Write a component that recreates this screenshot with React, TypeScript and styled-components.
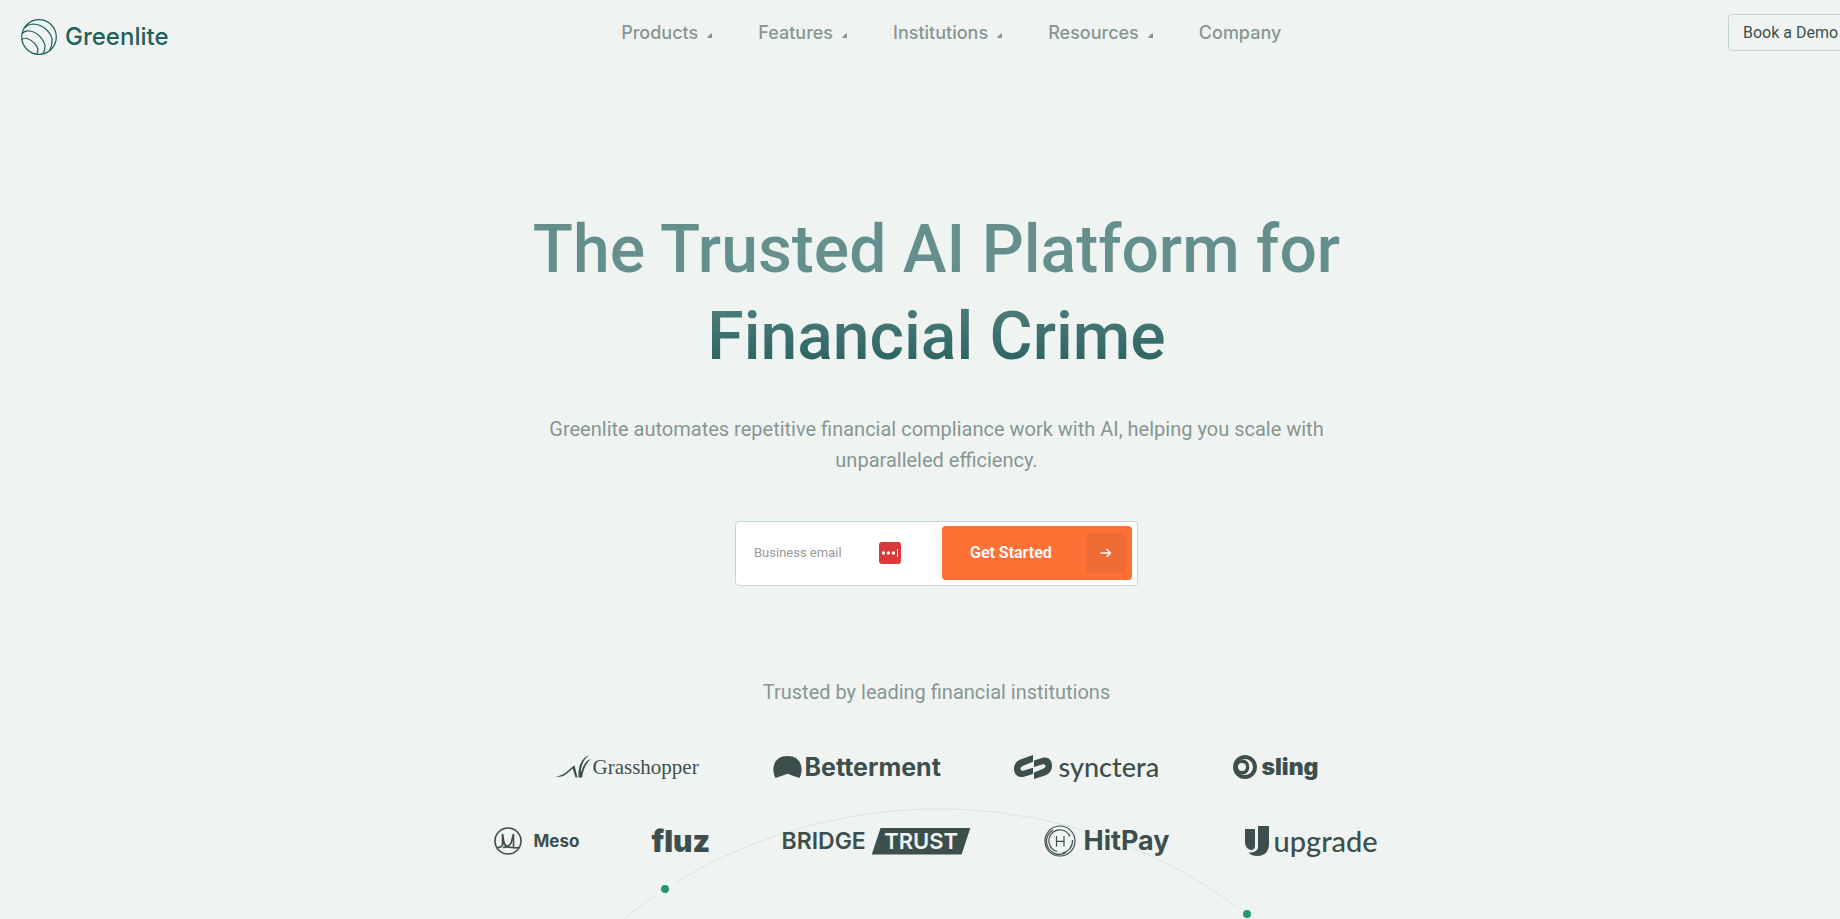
import React from "react";
import styled, { createGlobalStyle } from "styled-components";

const sans = `Inter, "Liberation Sans", sans-serif`;
const ink = "#3d4f4c";
const muted = "#879692";

const GlobalStyle = createGlobalStyle`
  *, *::before, *::after { box-sizing: border-box; }
  body { margin: 0; background: #eff4f3; font-family: ${sans}; color: ${ink}; }
`;

const Viewport = styled.div`
  position: relative;
  height: 100vh;
  overflow: hidden;
`;

/* The canvas is slightly wider than the window, so the demo button runs off its right edge. */
const Canvas = styled.div`
  position: relative;
  width: calc(100% + 33px);
`;

const Header = styled.header`
  display: flex;
  justify-content: space-between;
  align-items: flex-start;
  padding: 14px 21px 0;
`;

const Brand = styled.a`
  display: flex;
  align-items: center;
  gap: 8px;
  padding-top: 5px;
  color: #1f615c;
  font-size: 24px;
  font-weight: 500;
  line-height: 36px;
  text-decoration: none;
`;

const Nav = styled.nav`
  display: flex;
  gap: 46px;
  padding: 7px 0 0 6px;
`;

const NavLink = styled.a`
  display: flex;
  align-items: center;
  gap: 9px;
  color: ${muted};
  font-size: 18px;
  font-weight: 500;
  line-height: 24px;
  text-decoration: none;
`;

const Caret = styled.svg`
  margin-top: 4px;
`;

const DemoButton = styled.button`
  width: 124px;
  height: 37px;
  padding: 0 0 0 14px;
  border: 1px solid #c3d8d2;
  border-radius: 4px;
  background: transparent;
  color: ${ink};
  font-family: Roboto, ${sans};
  font-size: 16px;
  text-align: left;
  white-space: nowrap;
`;

const Hero = styled.main`
  position: relative;
  display: flex;
  flex-direction: column;
  align-items: center;
  padding-top: 151px;
`;

const Title = styled.h1`
  max-width: 860px;
  margin: 0;
  font-family: Roboto, ${sans};
  font-size: 66px;
  font-weight: 500;
  line-height: 87px;
  text-align: center;
  color: transparent;
  background: linear-gradient(180deg, #648f8c 36%, #2a6260 92%);
  background-clip: text;
  -webkit-background-clip: text;
`;

const Lead = styled.p`
  max-width: 800px;
  margin: 34px 0 0;
  color: ${muted};
  font-family: Roboto, ${sans};
  font-size: 20px;
  line-height: 31px;
  text-align: center;
`;

const SignupForm = styled.form`
  display: flex;
  align-items: center;
  width: 403px;
  height: 65px;
  margin-top: 45px;
  padding: 4px 5px 6px;
  border: 1px solid #c3d8d2;
  border-radius: 4px;
  background: #fff;
`;

const EmailInput = styled.input`
  width: 138px;
  height: 40px;
  padding: 0 0 0 13px;
  border: 0;
  outline: 0;
  background: transparent;
  font-family: Roboto, ${sans};
  font-size: 13px;
  &::placeholder { color: #999; opacity: 1; }
`;

const SubmitButton = styled.button`
  display: flex;
  align-items: center;
  justify-content: space-between;
  width: 190px;
  height: 54px;
  margin-left: auto;
  padding: 0 6px 0 28px;
  border: 0;
  border-radius: 4px;
  background: #ff7035;
  color: #fff;
  font-family: Roboto, ${sans};
  font-size: 16px;
  font-weight: 600;
`;

const ArrowTile = styled.span`
  display: grid;
  place-items: center;
  width: 40px;
  height: 40px;
  border-radius: 4px;
  background: #ef6c36;
`;

const Trusted = styled.h2`
  margin: 91px 0 0;
  color: ${muted};
  font-family: Roboto, ${sans};
  font-size: 20px;
  font-weight: 400;
  line-height: 31px;
`;

const LogoRow = styled.div<{ $top: number }>`
  display: flex;
  align-items: center;
  gap: 73px;
  height: 36px;
  margin-top: ${(p) => p.$top}px;
`;

const Logo = styled.div<{ $width: number; $gap: number }>`
  display: flex;
  align-items: center;
  gap: ${(p) => p.$gap}px;
  width: ${(p) => p.$width}px;
  white-space: nowrap;
  svg { flex: none; }
`;

const Wordmark = styled.span<{ $size: number; $weight?: number; $font?: string }>`
  font-family: ${(p) => p.$font ?? sans};
  font-size: ${(p) => p.$size}px;
  font-weight: ${(p) => p.$weight ?? 400};
  line-height: 32px;
`;

const TrustPlate = styled.span`
  display: flex;
  align-items: center;
  justify-content: center;
  width: 100px;
  height: 27px;
  background: ${ink};
  color: #eff4f3;
  clip-path: polygon(9% 0, 100% 0, 91% 100%, 0 100%);
`;

const Orbit = styled.svg`
  position: absolute;
  top: 0;
  left: 50%;
  margin: 800px 0 0 -504px;
  pointer-events: none;
`;

const navItems = [
  { label: "Products", menu: true },
  { label: "Features", menu: true },
  { label: "Institutions", menu: true },
  { label: "Resources", menu: true },
  { label: "Company", menu: false },
];

const GreenliteMark = () => (
  <svg width="36" height="36" viewBox="0 0 36 36" fill="none" stroke="currentColor" strokeWidth="1.2">
    <circle cx="18" cy="18" r="17.3" />
    <path d="M3.5 9C7 5 10 5 13 5C24 6 32 16 31 23C31 27 30 29 28.5 31.5" />
    <path d="M1 15C3 12 6 11.500 9 12C17 13 24 22 24 28C24 31 23 33 22 34.500" />
    <path d="M1 21C2 19 4 19 6 19.500C12 21 17 28 17 31C17 33 16.500 34 15.500 35" />
  </svg>
);

const GrasshopperMark = () => (
  <svg width="35" height="24" viewBox="0 0 35 24" fill={ink}>
    <path d="M0 21.300C8 21 12 15 18.500 10.300L21.500 22.500H19.500L16.700 13.500C11 18 8 23.500 0 21.300Z" />
    <path d="M22.500 22C22 12 25 3 33.500 0C28 4 25.500 9 25 16L25.500 17C27 10 30 5.500 35 4C30 8 27.500 14 26 22.500H23Z" />
  </svg>
);

const BettermentMark = () => (
  <svg width="29" height="22" viewBox="0 0 29 22" fill={ink}>
    <path d="M2.500 22C-2 14 0 0 14.500 0S31 14 26.500 22Q20 20 14.500 17.800Q9 20 2.500 22Z" />
  </svg>
);

const SyncteraMark = () => (
  <svg width="38" height="25" viewBox="0 0 38 25" fill={ink}>
    <path d="M19 0V6.800L9 10.800C5 12.800 6 16.500 10 15.500L19 12.800V19L10 21.700C4 23.300 0 19.500 0 14C0 9.500 2 6 7 4.300Z" />
    <path d="M20 24V17.500L29 13.800C33 12 32 8.500 28 9.500L20 12V5.500L28 3C34 1.400 38 5 38 10.500C38 15 36 18.500 31 20.500Z" />
  </svg>
);

const SlingMark = () => (
  <svg width="24" height="24" viewBox="0 0 24 24" fill="none">
    <circle cx="12" cy="12" r="10" stroke={ink} strokeWidth="4" />
    <circle cx="9" cy="12" r="5.500" stroke={ink} strokeWidth="3" />
    <path d="M9 5.300C13 5 15.500 8 15.500 12S13 19 9 18.700" stroke={ink} strokeWidth="1.500" />
  </svg>
);

const MesoMark = () => (
  <svg width="28" height="28" viewBox="0 0 28 28" fill="none" stroke={ink} strokeWidth="1.600">
    <circle cx="14" cy="14" r="13" />
    <path d="M3 20.500C6 20.500 8 20 8.500 18V7C9.500 9 9 15 11 17.500C12 19 13 20 15 20.500" />
    <path d="M19.500 20V7C18 10 18.500 15 16 17.500C14 19.500 12 20.500 9 20.500" />
    <path d="M8.500 14C10 18 14 20.500 18 20.500C21 21 23 21 25 20.500" />
  </svg>
);

const HitPayMark = () => (
  <svg width="32" height="32" viewBox="0 0 32 32" fill="none" stroke={ink} strokeWidth="1.200">
    <circle cx="16" cy="16" r="15" />
    <path d="M9 5A13 13 0 0 0 22 27.600" />
    <path d="M26 11.500A11 11 0 1 0 13 26.500" />
    <path d="M28.500 15A12.500 12.500 0 0 1 18 28.300" />
    <path d="M12.500 11V21.500M20 11V21.500M12.500 16.300H20" />
  </svg>
);

const UpgradeMark = () => (
  <svg width="24" height="30" viewBox="0 0 24 30" fill={ink}>
    <path d="M0 3H10V20C10 22.500 8.500 24 6.500 24C2.500 24 0 20 0 16Z" />
    <path d="M13 0H24V18C24 25 20 30 12.500 30C8.500 30 5.500 29 3.500 26.500C10 27 13 24.500 13 20Z" />
  </svg>
);

const lato = `Lato, ${sans}`;

export default function App() {
  return (
    <Viewport>
      <GlobalStyle />
      <Canvas>
        <Orbit width="1008" height="400" viewBox="0 0 1008 400" fill="none">
          <path
            d="M0 513A504 504 0 0 1 221.500 96M242 83A504 504 0 0 1 804 107M824 121A504 504 0 0 1 1008 513"
            stroke="#dae5e1"
          />
          <circle cx="232" cy="89" r="4" fill="#27966f" />
          <circle cx="814" cy="114" r="4" fill="#27966f" />
        </Orbit>

        <Header>
          <Brand href="#">
            <GreenliteMark />
            Greenlite
          </Brand>
          <Nav>
            {navItems.map((item) => (
              <NavLink href="#" key={item.label}>
                {item.label}
                {item.menu && (
                  <Caret width="5" height="5" viewBox="0 0 5 5" fill={muted}>
                    <path d="M5 0V5H0Q1 2 5 0Z" />
                  </Caret>
                )}
              </NavLink>
            ))}
          </Nav>
          <DemoButton type="button">Book a Demo</DemoButton>
        </Header>

        <Hero>
          <Title>
            The Trusted AI Platform for
            <br />
            Financial Crime
          </Title>
          <Lead>
            Greenlite automates repetitive financial compliance work with AI, helping you scale with
            <br />
            unparalleled efficiency.
          </Lead>

          <SignupForm onSubmit={(e) => e.preventDefault()}>
            <EmailInput type="email" placeholder="Business email" aria-label="Business email" />
            <svg width="22" height="22" viewBox="0 0 22 22">
              <rect width="22" height="22" rx="3" fill="#d93b3b" />
              <circle cx="4.500" cy="11" r="1.700" fill="#fff" />
              <circle cx="9.500" cy="11" r="1.700" fill="#fff" />
              <circle cx="14.500" cy="11" r="1.700" fill="#fff" />
              <rect x="18" y="7" width="1" height="8" fill="#fff" />
            </svg>
            <SubmitButton type="submit">
              Get Started
              <ArrowTile>
                <svg width="12" height="10" viewBox="0 0 12 10" fill="none" stroke="#fff" strokeWidth="1.500">
                  <path d="M1 5H10.500M7 1.500L10.500 5L7 8.500" strokeLinecap="round" strokeLinejoin="round" />
                </svg>
              </ArrowTile>
            </SubmitButton>
          </SignupForm>

          <Trusted>Trusted by leading financial institutions</Trusted>

          <LogoRow $top={41}>
            <Logo $width={144} $gap={2}>
              <GrasshopperMark />
              <Wordmark $size={21} $font={`"Liberation Serif", serif`}>Grasshopper</Wordmark>
            </Logo>
            <Logo $width={168} $gap={3}>
              <BettermentMark />
              <Wordmark $size={25} $weight={700}>Betterment</Wordmark>
            </Logo>
            <Logo $width={146} $gap={7}>
              <SyncteraMark />
              <Wordmark $size={27} $font={lato} $weight={500}>synctera</Wordmark>
            </Logo>
            <Logo $width={85} $gap={5}>
              <SlingMark />
              <Wordmark $size={23} $weight={900}>sling</Wordmark>
            </Logo>
          </LogoRow>

          <LogoRow $top={38}>
            <Logo $width={85} $gap={12}>
              <MesoMark />
              <Wordmark $size={17} $weight={700}>Meso</Wordmark>
            </Logo>
            <Logo $width={57} $gap={0}>
              <Wordmark $size={30} $weight={900}>fluz</Wordmark>
            </Logo>
            <Logo $width={189} $gap={6}>
              <Wordmark $size={23} $weight={600}>BRIDGE</Wordmark>
              <TrustPlate>
                <Wordmark $size={22} $weight={600}>TRUST</Wordmark>
              </TrustPlate>
            </Logo>
            <Logo $width={128} $gap={8}>
              <HitPayMark />
              <Wordmark $size={27} $weight={700}>HitPay</Wordmark>
            </Logo>
            <Logo $width={135} $gap={5}>
              <UpgradeMark />
              <Wordmark $size={29} $font={lato} $weight={500}>upgrade</Wordmark>
            </Logo>
          </LogoRow>
        </Hero>
      </Canvas>
    </Viewport>
  );
}
